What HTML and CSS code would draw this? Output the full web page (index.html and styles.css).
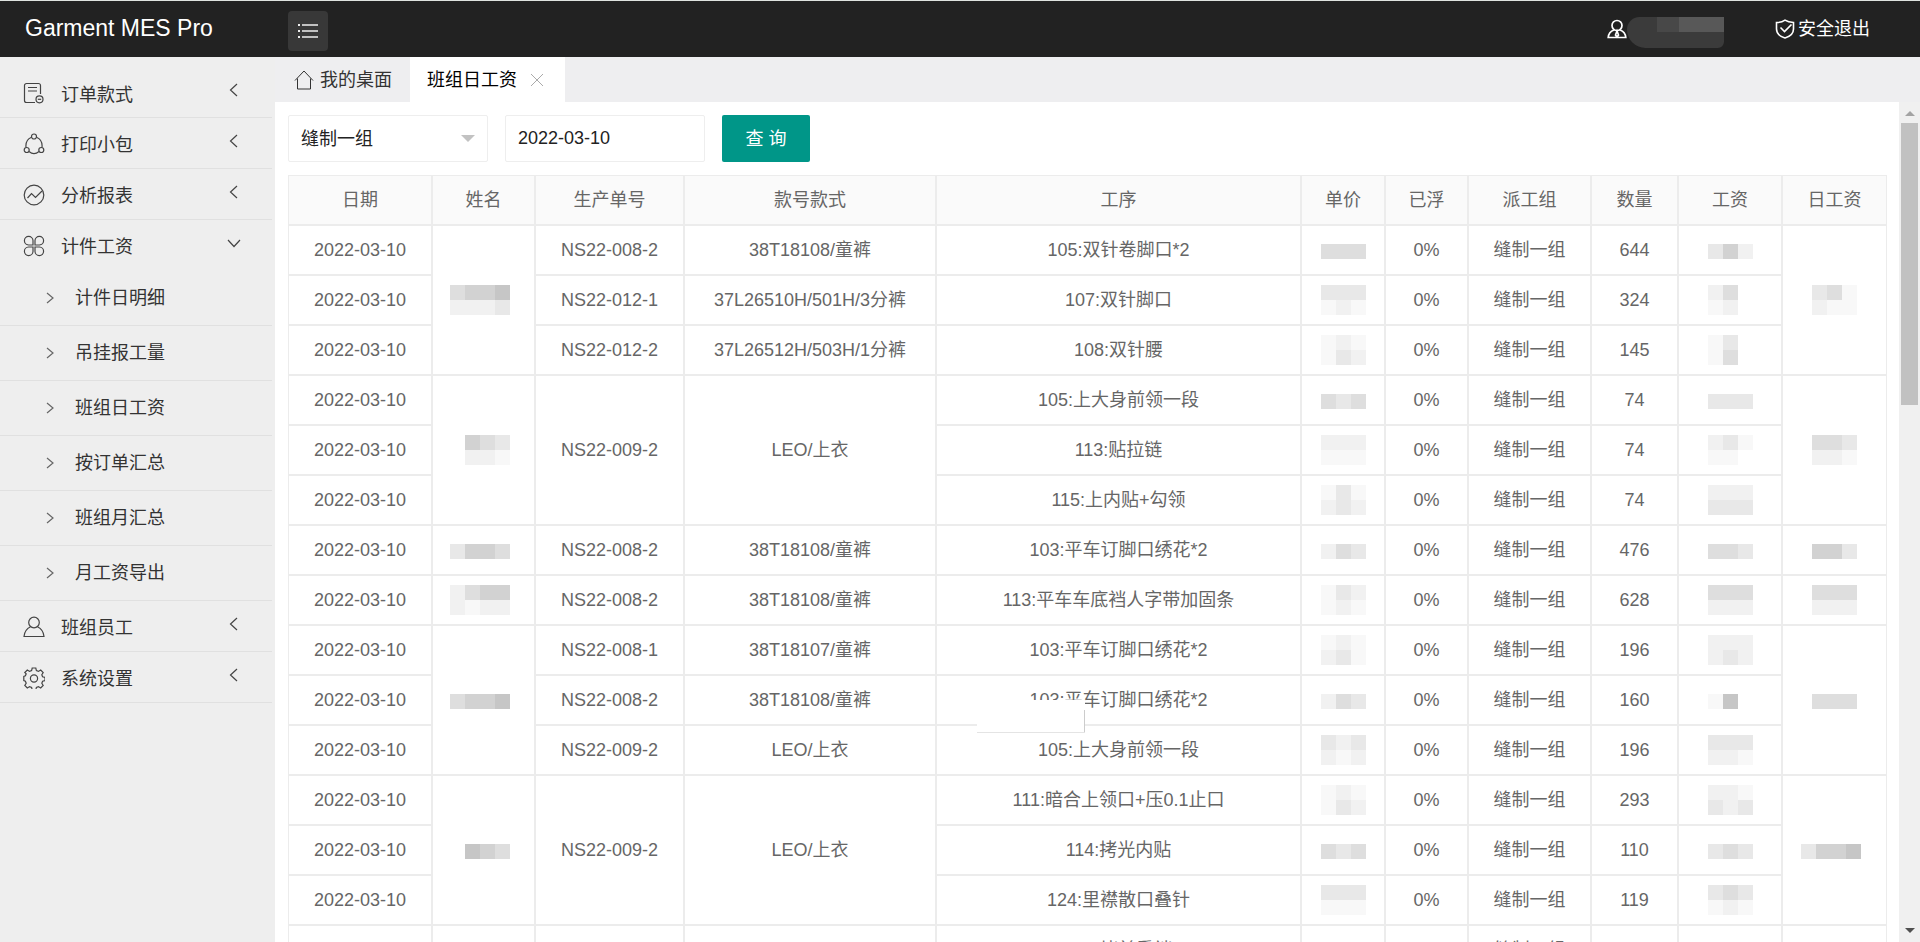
FILE: index.html
```html
<!DOCTYPE html>
<html lang="zh-CN">
<head>
<meta charset="utf-8">
<title>Garment MES Pro</title>
<link rel="stylesheet" href="styles.css">
</head>
<body>
<header class="topbar">
  <a class="logo" href="#">Garment MES Pro</a>
  <button class="toggle" type="button" aria-label="菜单">
    <svg width="22" height="18" viewBox="0 0 22 18" stroke="currentColor" stroke-width="2"><path d="M1 3h2M1 9h2M1 15h2" /><path d="M5 3h16M5 9h16M5 15h16" stroke-width="1.6"/></svg>
  </button>
  <nav class="account">
    <a href="#" class="user" aria-label="用户">
      <svg width="20" height="20" viewBox="0 0 20 20" fill="none" stroke="currentColor" stroke-width="1.7"><circle cx="10" cy="6.5" r="5"/><path d="M7 11C4 12 1.500 15 1.200 18.500H18.800C18.500 15 16 12 13 11M10 12l-1.500 4 1.500 2 1.500-2z"/></svg>
      <span class="veil"><i></i><i></i><i class="lit"></i><i class="lit"></i><i class="lit"></i><i></i><i></i><i></i><i></i><i></i></span>
    </a>
    <a href="#" class="logout">
      <svg width="20" height="20" viewBox="0 0 20 20" fill="none" stroke="currentColor" stroke-width="1.6"><path d="M10 1.200C7.500 3 4.500 3.500 1.500 3.500V10c0 4.500 3.500 7.500 8.500 9 5-1.500 8.500-4.500 8.500-9V3.500C15.500 3.500 12.500 3 10 1.200z"/><path d="M5.500 8.500l4 4 7-7"/></svg>
      安全退出
    </a>
  </nav>
</header>
<div class="shell">
  <aside class="sidebar">
    <ul class="menu">
      <li><a href="#" class="item">
        <svg class="icon" viewBox="0 0 22 22"><path d="M17.500 12V3.500a2 2 0 0 0-2-2H3.500a2 2 0 0 0-2 2v15a2 2 0 0 0 2 2H12M5 5.500h9M5 9h9"/><circle cx="16.500" cy="17.300" r="3.500"/><path d="M14.800 17.300h3.400"/></svg>
        <span>订单款式</span><svg class="arrow" viewBox="0 0 14 14"><path d="M10 1L3.500 7l6.500 6"/></svg></a></li>
      <li><a href="#" class="item">
        <svg class="icon" viewBox="0 0 22 22"><circle cx="11" cy="3.500" r="2.500"/><circle cx="3.700" cy="17" r="2.500"/><circle cx="18.300" cy="17" r="2.500"/><path d="M8.500 4.300C4.500 6 2.500 10 3 14.500M13.500 4.300c4 1.700 6 5.700 5.500 10.200M6 18.500c3 2.500 7 2.500 10 0"/></svg>
        <span>打印小包</span><svg class="arrow" viewBox="0 0 14 14"><path d="M10 1L3.500 7l6.500 6"/></svg></a></li>
      <li><a href="#" class="item">
        <svg class="icon" viewBox="0 0 22 22"><circle cx="11" cy="11" r="9.800"/><path d="M4.500 14l4-4.500 4 4L19 7"/></svg>
        <span>分析报表</span><svg class="arrow" viewBox="0 0 14 14"><path d="M10 1L3.500 7l6.500 6"/></svg></a></li>
      <li><a href="#" class="item open">
        <svg class="icon" viewBox="0 0 22 22"><path d="M10 10H5.500A4.300 4.300 0 1 1 10 5.500zM12 10V5.500A4.300 4.300 0 1 1 16.500 10zM10 12v4.500A4.300 4.300 0 1 1 5.500 12zM12 12h4.500A4.300 4.300 0 1 1 12 16.500z"/></svg>
        <span>计件工资</span><svg class="arrow" viewBox="0 0 14 14"><path d="M1 4l6 6.500L13 4"/></svg></a>
        <ul class="submenu">
          <li><a href="#"><svg class="caret" viewBox="0 0 10 12"><path d="M2 1l6 5-6 5"/></svg>计件日明细</a></li>
          <li><a href="#"><svg class="caret" viewBox="0 0 10 12"><path d="M2 1l6 5-6 5"/></svg>吊挂报工量</a></li>
          <li><a href="#"><svg class="caret" viewBox="0 0 10 12"><path d="M2 1l6 5-6 5"/></svg>班组日工资</a></li>
          <li><a href="#"><svg class="caret" viewBox="0 0 10 12"><path d="M2 1l6 5-6 5"/></svg>按订单汇总</a></li>
          <li><a href="#"><svg class="caret" viewBox="0 0 10 12"><path d="M2 1l6 5-6 5"/></svg>班组月汇总</a></li>
          <li><a href="#"><svg class="caret" viewBox="0 0 10 12"><path d="M2 1l6 5-6 5"/></svg>月工资导出</a></li>
        </ul></li>
      <li><a href="#" class="item">
        <svg class="icon" viewBox="0 0 22 22"><circle cx="11" cy="6.500" r="5.300"/><path d="M7.500 10.800C4 12.500 1.500 15.500 1 20.500h20c-.5-5-3-8-6.500-9.700"/></svg>
        <span>班组员工</span><svg class="arrow" viewBox="0 0 14 14"><path d="M10 1L3.500 7l6.500 6"/></svg></a></li>
      <li><a href="#" class="item">
        <svg class="icon" viewBox="0 0 22 22"><path d="M9.200 1h3.600l.6 2.600 2 .8 2.300-1.400 2.500 2.500-1.400 2.300.8 2 2.400.6v3.200l-2.400.6-.8 2 1.400 2.300-2.500 2.500-2.300-1.400-2 .8-.6 2.600H9.200l-.6-2.600-2-.8L4.300 21l-2.500-2.500 1.400-2.300-.8-2L0.800 13.600V9.400l1.600-.6.8-2L1.800 5.500 4.300 3l2.300 1.400 2-.8z"/><circle cx="11" cy="11.500" r="3.600"/></svg>
        <span>系统设置</span><svg class="arrow" viewBox="0 0 14 14"><path d="M10 1L3.500 7l6.500 6"/></svg></a></li>
    </ul>
  </aside>
  <main class="main">
    <nav class="tabs">
      <a href="#" class="tab home"><svg width="20" height="20" viewBox="0 0 20 20" fill="none" stroke="currentColor"><path d="M1 10.500L10 1l9 9.500M3.500 8.500V19h13V8.500"/></svg>我的桌面</a>
      <div class="tab active"><a href="#">班组日工资</a><button type="button" class="close" aria-label="关闭"><svg width="12" height="12" viewBox="0 0 12 12" stroke="currentColor"><path d="M0 0l12 12M12 0L0 12"/></svg></button></div>
    </nav>
    <div class="body">
      <div class="page">
        <form class="filters">
          <div class="select-box"><select aria-label="班组"><option>缝制一组</option></select></div>
          <input class="date" type="text" aria-label="日期" value="2022-03-10">
          <button class="query" type="button">查 询</button>
        </form>
        <table class="wages">
          <colgroup><col class="w-date"><col class="w-name"><col class="w-order"><col class="w-style"><col class="w-step"><col class="w-price"><col class="w-float"><col class="w-group"><col class="w-qty"><col class="w-pay"><col class="w-day"></colgroup>
          <thead><tr><th>日期</th><th>姓名</th><th>生产单号</th><th>款号款式</th><th>工序</th><th>单价</th><th>已浮</th><th>派工组</th><th>数量</th><th>工资</th><th>日工资</th></tr></thead>
          <tbody>
            <tr><td>2022-03-10</td><td rowspan="3"><span class="mosaic four"><i class="s4"></i><i class="s5"></i><i class="s5"></i><i class="s6"></i><i class="s2"></i><i class="s2"></i><i class="s2"></i><i class="s3"></i></span></td><td>NS22-008-2</td><td>38T18108/童裤</td><td>105:双针卷脚口*2</td><td><span class="mosaic"><i class="s4"></i><i class="s4"></i><i class="s4"></i></span></td><td>0%</td><td>缝制一组</td><td>644</td><td><span class="mosaic"><i class="s3"></i><i class="s5"></i><i class="s2"></i></span></td><td rowspan="3"><span class="mosaic"><i class="s3"></i><i class="s4"></i><i class="s1"></i><i class="s2"></i><i class="s1"></i><i class="s1"></i></span></td></tr>
            <tr><td>2022-03-10</td><td>NS22-012-1</td><td>37L26510H/501H/3分裤</td><td>107:双针脚口</td><td><span class="mosaic"><i class="s3"></i><i class="s3"></i><i class="s3"></i><i class="s1"></i><i class="s2"></i><i class="s1"></i></span></td><td>0%</td><td>缝制一组</td><td>324</td><td><span class="mosaic"><i class="s2"></i><i class="s4"></i><i></i><i class="s1"></i><i class="s2"></i><i></i></span></td></tr>
            <tr><td>2022-03-10</td><td>NS22-012-2</td><td>37L26512H/503H/1分裤</td><td>108:双针腰</td><td><span class="mosaic"><i class="s1"></i><i class="s2"></i><i class="s1"></i><i class="s1"></i><i class="s3"></i><i class="s2"></i></span></td><td>0%</td><td>缝制一组</td><td>145</td><td><span class="mosaic"><i class="s1"></i><i class="s3"></i><i></i><i class="s1"></i><i class="s4"></i><i></i></span></td></tr>
            <tr><td>2022-03-10</td><td rowspan="3"><span class="mosaic four"><i></i><i class="s5"></i><i class="s4"></i><i class="s3"></i><i></i><i class="s2"></i><i class="s2"></i><i class="s1"></i></span></td><td rowspan="3">NS22-009-2</td><td rowspan="3">LEO/上衣</td><td>105:上大身前领一段</td><td><span class="mosaic"><i class="s4"></i><i class="s3"></i><i class="s4"></i></span></td><td>0%</td><td>缝制一组</td><td>74</td><td><span class="mosaic"><i class="s3"></i><i class="s3"></i><i class="s3"></i></span></td><td rowspan="3"><span class="mosaic"><i class="s4"></i><i class="s4"></i><i class="s3"></i><i class="s2"></i><i class="s2"></i><i class="s1"></i></span></td></tr>
            <tr><td>2022-03-10</td><td>113:贴拉链</td><td><span class="mosaic"><i class="s2"></i><i class="s2"></i><i class="s2"></i><i class="s1"></i><i class="s1"></i><i class="s1"></i></span></td><td>0%</td><td>缝制一组</td><td>74</td><td><span class="mosaic"><i class="s2"></i><i class="s3"></i><i class="s1"></i><i class="s1"></i><i class="s1"></i><i></i></span></td></tr>
            <tr><td>2022-03-10</td><td>115:上内贴+勾领</td><td><span class="mosaic"><i class="s1"></i><i class="s3"></i><i class="s1"></i><i class="s2"></i><i class="s3"></i><i class="s2"></i></span></td><td>0%</td><td>缝制一组</td><td>74</td><td><span class="mosaic"><i class="s2"></i><i class="s2"></i><i class="s2"></i><i class="s3"></i><i class="s3"></i><i class="s3"></i></span></td></tr>
            <tr><td>2022-03-10</td><td><span class="mosaic four"><i class="s3"></i><i class="s5"></i><i class="s5"></i><i class="s4"></i></span></td><td>NS22-008-2</td><td>38T18108/童裤</td><td>103:平车订脚口绣花*2</td><td><span class="mosaic"><i class="s2"></i><i class="s4"></i><i class="s3"></i></span></td><td>0%</td><td>缝制一组</td><td>476</td><td><span class="mosaic"><i class="s4"></i><i class="s4"></i><i class="s3"></i></span></td><td><span class="mosaic"><i class="s5"></i><i class="s5"></i><i class="s3"></i></span></td></tr>
            <tr><td>2022-03-10</td><td><span class="mosaic four"><i class="s2"></i><i class="s4"></i><i class="s5"></i><i class="s5"></i><i class="s2"></i><i class="s1"></i><i class="s2"></i><i class="s2"></i></span></td><td>NS22-008-2</td><td>38T18108/童裤</td><td>113:平车车底裆人字带加固条</td><td><span class="mosaic"><i class="s1"></i><i class="s3"></i><i class="s2"></i><i class="s1"></i><i class="s2"></i><i class="s1"></i></span></td><td>0%</td><td>缝制一组</td><td>628</td><td><span class="mosaic"><i class="s4"></i><i class="s4"></i><i class="s4"></i><i class="s2"></i><i class="s2"></i><i class="s2"></i></span></td><td><span class="mosaic"><i class="s4"></i><i class="s4"></i><i class="s4"></i><i class="s2"></i><i class="s2"></i><i class="s2"></i></span></td></tr>
            <tr><td>2022-03-10</td><td rowspan="3"><span class="mosaic four"><i class="s4"></i><i class="s5"></i><i class="s5"></i><i class="s6"></i></span></td><td>NS22-008-1</td><td>38T18107/童裤</td><td>103:平车订脚口绣花*2</td><td><span class="mosaic"><i class="s1"></i><i class="s2"></i><i class="s1"></i><i class="s2"></i><i class="s3"></i><i class="s1"></i></span></td><td>0%</td><td>缝制一组</td><td>196</td><td><span class="mosaic"><i class="s2"></i><i class="s2"></i><i class="s2"></i><i class="s2"></i><i class="s3"></i><i class="s2"></i></span></td><td rowspan="3"><span class="mosaic"><i class="s4"></i><i class="s4"></i><i class="s4"></i></span></td></tr>
            <tr><td>2022-03-10</td><td>NS22-008-2</td><td>38T18108/童裤</td><td class="covered">103:平车订脚口绣花*2<span class="cover"></span></td><td><span class="mosaic"><i class="s2"></i><i class="s4"></i><i class="s3"></i></span></td><td>0%</td><td>缝制一组</td><td>160</td><td><span class="mosaic"><i class="s1"></i><i class="s6"></i><i></i></span></td></tr>
            <tr><td>2022-03-10</td><td>NS22-009-2</td><td>LEO/上衣</td><td>105:上大身前领一段</td><td><span class="mosaic"><i class="s3"></i><i class="s2"></i><i class="s3"></i><i class="s2"></i><i class="s1"></i><i class="s2"></i></span></td><td>0%</td><td>缝制一组</td><td>196</td><td><span class="mosaic"><i class="s3"></i><i class="s3"></i><i class="s3"></i><i class="s2"></i><i class="s2"></i><i class="s1"></i></span></td></tr>
            <tr><td>2022-03-10</td><td rowspan="3"><span class="mosaic four"><i></i><i class="s6"></i><i class="s5"></i><i class="s4"></i></span></td><td rowspan="3">NS22-009-2</td><td rowspan="3">LEO/上衣</td><td>111:暗合上领口+压0.1止口</td><td><span class="mosaic"><i class="s1"></i><i class="s2"></i><i class="s1"></i><i class="s1"></i><i class="s3"></i><i class="s2"></i></span></td><td>0%</td><td>缝制一组</td><td>293</td><td><span class="mosaic"><i class="s2"></i><i class="s2"></i><i class="s1"></i><i class="s3"></i><i class="s2"></i><i class="s3"></i></span></td><td rowspan="3"><span class="mosaic four"><i class="s3"></i><i class="s5"></i><i class="s5"></i><i class="s6"></i></span></td></tr>
            <tr><td>2022-03-10</td><td>114:拷光内贴</td><td><span class="mosaic"><i class="s4"></i><i class="s3"></i><i class="s4"></i></span></td><td>0%</td><td>缝制一组</td><td>110</td><td><span class="mosaic"><i class="s3"></i><i class="s4"></i><i class="s3"></i></span></td></tr>
            <tr><td>2022-03-10</td><td>124:里襟散口叠针</td><td><span class="mosaic"><i class="s3"></i><i class="s3"></i><i class="s3"></i><i class="s1"></i><i class="s1"></i><i class="s1"></i></span></td><td>0%</td><td>缝制一组</td><td>119</td><td><span class="mosaic"><i class="s3"></i><i class="s4"></i><i class="s3"></i><i class="s1"></i><i class="s2"></i><i class="s1"></i></span></td></tr>
            <tr><td>2022-03-10</td><td></td><td></td><td></td><td>125:拷前重裆</td><td></td><td>0%</td><td>缝制一组</td><td>119</td><td></td><td></td></tr>
          </tbody>
        </table>
      </div>
      <div class="scrollbar" aria-hidden="true"><span class="up"></span><span class="thumb"></span><span class="down"></span></div>
    </div>
  </main>
</div>
</body>
</html>
```

FILE: styles.css
```css
* { box-sizing: border-box; }
html, body { height: 100%; margin: 0; }
body {
  display: flex;
  flex-direction: column;
  overflow: hidden;
  background: #eee;
  color: #333;
  font: 400 18px/24px "Liberation Sans", "Noto Sans CJK SC", sans-serif;
}
a { color: inherit; text-decoration: none; }
ul { list-style: none; margin: 0; padding: 0; }
button, input, select { font: inherit; margin: 0; }
svg { flex: none; display: block; }

/* top bar */
.topbar {
  flex: none;
  display: flex;
  align-items: center;
  height: 57px;
  border-top: 1px solid #dfe3e0;
  background: #222;
  color: #fff;
}
.logo { width: 288px; padding-left: 25px; padding-bottom: 2px; font-size: 23px; }
.toggle {
  display: grid;
  place-items: center;
  width: 40px;
  height: 40px;
  margin-top: 3px;
  padding: 0;
  border: 0;
  border-radius: 4px;
  background: #383838;
  color: #eee;
}
.account { display: flex; align-items: center; gap: 37px; margin-left: auto; padding-right: 50px; }
.user, .logout { display: flex; align-items: center; gap: 3px; }
.user { gap: 0; }
.veil {
  display: grid;
  grid-template-columns: 30px 22px 15px 15px 15px;
  grid-template-rows: 15px 16px;
  margin: 7px 14px 0 0;
  overflow: hidden;
  border-radius: 16px 0 8px 24px;
}
.veil i { background: #3b3b3b; }
.veil .lit { background: #585858; }
.veil i:nth-child(2) { background: #484848; }

/* side menu */
.shell { flex: 1; min-height: 0; display: flex; }
.sidebar { flex: none; width: 275px; padding: 11px 3px 0 0; }
.menu > li:first-child .item { height: 50px; }
.item {
  display: flex;
  align-items: center;
  height: 51px;
  padding: 4px 31px 0 23px;
  border-bottom: 1px solid #e0e0e0;
}
.item.open { border-bottom-color: transparent; }
.item span { flex: 1; margin-left: 16px; }
.icon { width: 22px; height: 22px; margin-bottom: 3px; fill: none; stroke: #444; stroke-width: 1.2; }
.arrow { width: 14px; height: 14px; margin-bottom: 9px; fill: none; stroke: #444; stroke-width: 1.2; }
.submenu a { display: flex; align-items: center; gap: 20px; height: 55px; padding-left: 45px; border-bottom: 1px solid #e0e0e0; }
.caret { width: 10px; height: 12px; fill: none; stroke: #666; stroke-width: 1.2; }

/* tabs */
.main { flex: 1; min-width: 0; display: flex; flex-direction: column; }
.tabs { flex: none; display: flex; height: 45px; background: #eeeef0; }
.tab { display: flex; align-items: center; }
.home { width: 135px; padding-left: 19px; gap: 6px; }
.active { gap: 14px; padding: 0 22px 0 17px; background: #fff; color: #000; }
.close { padding: 0; border: 0; background: none; color: #aaa; }

/* content */
.body { flex: 1; min-height: 0; display: flex; background: #fff; }
.page { flex: 1; min-width: 0; overflow: hidden; padding: 13px 12px 0 13px; }
.filters { display: flex; gap: 17px; margin-bottom: 13px; }
.select-box { position: relative; width: 200px; }
.select-box::after {
  content: "";
  position: absolute;
  top: 20px;
  right: 13px;
  border: 7px solid transparent;
  border-top-color: #c2c2c2;
  pointer-events: none;
}
.filters select, .date {
  width: 200px;
  height: 47px;
  padding: 0 12px;
  border: 1px solid #eee;
  border-radius: 2px;
  background: #fff;
  color: #222;
  appearance: none;
}
.query { width: 88px; height: 47px; border: 0; border-radius: 2px; background: #009688; color: #fff; }

.wages { width: 100%; table-layout: fixed; border-collapse: separate; border-spacing: 0; border: 0; color: #666; text-align: center; }
.wages th, .wages td { height: 50px; padding: 0; border: 1px solid #ececec; font-weight: 400; white-space: nowrap; }
.wages th { background: #fafafa; }
.w-date { width: 144px; }
.w-name { width: 103px; }
.w-order { width: 149px; }
.w-style { width: 252px; }
.w-step { width: 365px; }
.w-price { width: 84px; }
.w-float { width: 83px; }
.w-group { width: 123px; }
.w-qty { width: 87px; }
.w-pay { width: 104px; }
.w-day { width: 105px; }

/* pixelated private values */
.mosaic { display: inline-grid; grid-template-columns: repeat(3, 15px); grid-auto-rows: 15px; vertical-align: middle; }
.four { grid-template-columns: repeat(4, 15px); margin-right: 8px; }
.s1 { background: #f8f8f8; }
.s2 { background: #f1f1f1; }
.s3 { background: #e8e8e8; }
.s4 { background: #dedede; }
.s5 { background: #d2d2d2; }
.s6 { background: #c6c6c6; }

.covered { position: relative; }
.cover {
  position: absolute;
  z-index: 1;
  top: 24px;
  left: 11%;
  width: 108px;
  height: 33px;
  border-bottom: 1px solid #e4e4e4;
  background: linear-gradient(#ccc, #ccc) right bottom / 1px 22px no-repeat #fff;
}

.scrollbar { flex: none; display: flex; flex-direction: column; align-items: center; width: 21px; padding: 2px 0 8px; background: #f0f0f0; }
.up { border: 5px solid transparent; border-bottom-color: #a3a3a3; margin: 2px 0 7px; }
.thumb { width: 17px; height: 34%; background: #c1c1c1; }
.down { margin-top: auto; margin-bottom: -4px; border: 5px solid transparent; border-top-color: #505050; }
```
